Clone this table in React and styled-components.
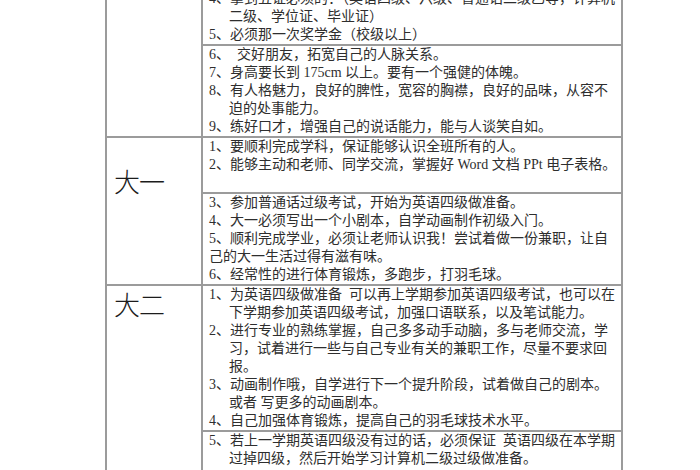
import React from "react";
import styled, { createGlobalStyle } from "styled-components";

const Global = createGlobalStyle`
  html, body {
    margin: 0;
    padding: 0;
    background: #ffffff;
    overflow: hidden;
  }
`;

const Page = styled.div`
  padding-left: 105px;
  font-family: "Liberation Serif", "Noto Sans CJK SC", serif;
  color: #2e2e2e;
`;

const Table = styled.div`
  width: 518px;
  box-sizing: border-box;
  margin-top: -10px;
  border-left: 2px solid #9b9b9b;
  border-right: 2px solid #9b9b9b;
`;

const Row = styled.div`
  display: grid;
  grid-template-columns: 96px 1fr;
  border-bottom: ${(p) => (p.$last ? "none" : "2px solid #9b9b9b")};
`;

const LabelCell = styled.div`
  box-sizing: border-box;
  border-right: 2px solid #9b9b9b;
  padding: ${(p) => p.$top || 0}px 0 0 7px;
  font-family: "Noto Sans CJK SC", sans-serif;
  font-size: 26px;
  font-weight: 300;
  line-height: 30px;
  color: #1c1c1c;
  letter-spacing: -1px;
`;

const ContentCell = styled.div`
  display: flex;
  flex-direction: column;
  min-width: 0;
`;

const Section = styled.div`
  padding-left: 6px;
  border-top: ${(p) => (p.$first ? "none" : "2px solid #9b9b9b")};
`;

const Line = styled.div`
  white-space: pre;
  font-size: 14px;
  line-height: 18px;
  height: 18px;
  padding-left: ${(p) => (p.$indent ? "20px" : "0")};
`;

const rows = [
  {
    label: "",
    top: 0,
    sections: [
      [
        ["4、拿到五证必须的：（英语四级、六级、普通话二级乙等，计算机"],
        ["二级、学位证、毕业证）", true],
        ["5、必须那一次奖学金（校级以上）"],
      ],
      [
        ["6、\u2002交好朋友，拓宽自己的人脉关系。"],
        ["7、身高要长到 175cm 以上。要有一个强健的体魄。"],
        ["8、有人格魅力，良好的脾性，宽容的胸襟，良好的品味，从容不"],
        ["迫的处事能力。", true],
        ["9、练好口才，增强自己的说话能力，能与人谈笑自如。"],
      ],
    ],
  },
  {
    label: "大一",
    top: 28,
    sections: [
      [
        ["1、要顺利完成学科，保证能够认识全班所有的人。"],
        ["2、能够主动和老师、同学交流，掌握好 Word 文档 PPt 电子表格。"],
        [""],
      ],
      [
        ["3、参加普通话过级考试，开始为英语四级做准备。"],
        ["4、大一必须写出一个小剧本，自学动画制作初级入门。"],
        ["5、顺利完成学业，必须让老师认识我！尝试着做一份兼职，让自"],
        ["己的大一生活过得有滋有味。"],
        ["6、经常性的进行体育锻炼，多跑步，打羽毛球。"],
      ],
    ],
  },
  {
    label: "大二",
    top: 3,
    last: true,
    sections: [
      [
        ["1、为英语四级做准备\u2002可以再上学期参加英语四级考试，也可以在"],
        ["下学期参加英语四级考试，加强口语联系，以及笔试能力。", true],
        ["2、进行专业的熟练掌握，自己多多动手动脑，多与老师交流，学"],
        ["习，试着进行一些与自己专业有关的兼职工作，尽量不要求回", true],
        ["报。", true],
        ["3、动画制作哦，自学进行下一个提升阶段，试着做自己的剧本。"],
        ["或者 写更多的动画剧本。", true],
        ["4、自己加强体育锻炼，提高自己的羽毛球技术水平。"],
      ],
      [
        ["5、若上一学期英语四级没有过的话，必须保证\u2002英语四级在本学期"],
        ["过掉四级，然后开始学习计算机二级过级做准备。", true],
        [""],
      ],
    ],
  },
];

export default function App() {
  return (
    <>
      <Global />
      <Page>
        <Table>
          {rows.map((row, ri) => (
            <Row key={ri} $last={row.last}>
              <LabelCell $top={row.top}>{row.label}</LabelCell>
              <ContentCell>
                {row.sections.map((sec, si) => (
                  <Section key={si} $first={si === 0}>
                    {sec.map(([text, indent], li) => (
                      <Line key={li} $indent={indent}>
                        {text}
                      </Line>
                    ))}
                  </Section>
                ))}
              </ContentCell>
            </Row>
          ))}
        </Table>
      </Page>
    </>
  );
}
